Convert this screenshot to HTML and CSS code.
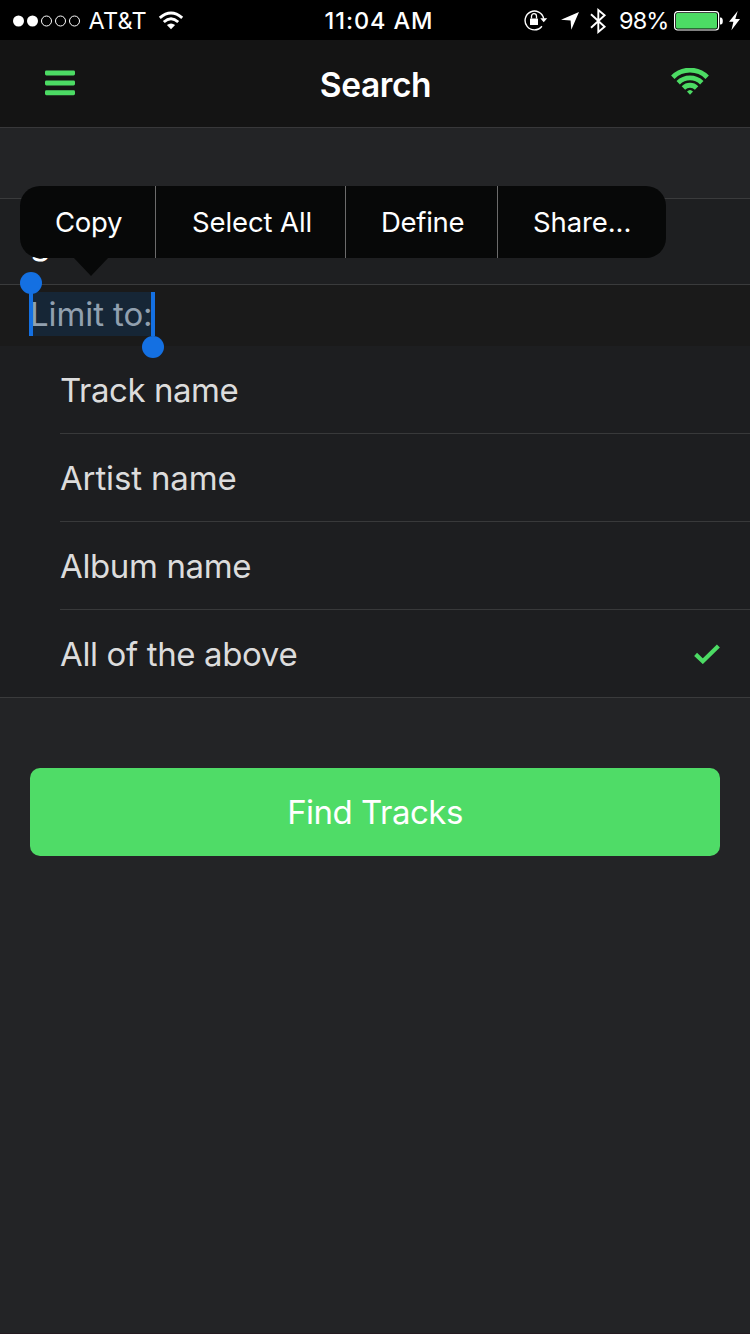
FILE: index.html
```html
<!DOCTYPE html>
<html lang="en">
<head>
<meta charset="utf-8">
<title>Search</title>
<link rel="stylesheet" href="styles.css">
</head>
<body>
<div class="app">
  <header class="status">
    <div class="status-left">
      <svg class="signal" width="68" height="12" viewBox="0 0 68 12">
        <g fill="#fff"><circle cx="5.5" cy="6" r="5.5"/><circle cx="19.5" cy="6" r="5.5"/></g>
        <g fill="none" stroke="#fff" stroke-width="1"><circle cx="33.5" cy="6" r="5"/><circle cx="47.5" cy="6" r="5"/><circle cx="61.5" cy="6" r="5"/></g>
      </svg>
      <span class="carrier">AT&amp;T</span>
      <svg class="wifi-small" width="26" height="19" viewBox="0 0 26 19">
        <path d="M13 18.2 8.9 14.1Q13 10.7 17.1 14.1Z" fill="#fff"/>
        <g fill="none" stroke="#fff" stroke-width="2.9"><path d="M5.8 11Q13 4.7 20.2 11"/><path d="M1.8 6.9Q13-2.9 24.2 6.9"/></g>
      </svg>
    </div>
    <span class="clock">11:04 AM</span>
    <div class="status-right">
      <svg class="lock" width="24" height="22" viewBox="0 0 24 22">
        <path d="M17.9 16.3A9.4 9.4 0 1 1 19.7 8.6" fill="none" stroke="#fff" stroke-width="1.4"/>
        <path d="M16.3 8.3H23.2L19.7 12.2Z" fill="#fff"/>
        <rect x="6" y="8.5" width="8" height="6.5" rx=".5" fill="#fff"/>
        <path d="M7.5 8.5V6.2a2.5 2.5 0 0 1 5 0V8.5" fill="none" stroke="#fff" stroke-width="1.3"/>
      </svg>
      <svg class="location" width="18" height="18" viewBox="0 0 18 18"><path d="M18 0 10.3 17.8 9.6 8.5 0 7.8Z" fill="#fff"/></svg>
      <svg class="bluetooth" width="17" height="26" viewBox="0 0 17 26"><path d="M1 6.3 14.6 18.8 8.3 24V2L14.6 7.2 1 19.7" fill="none" stroke="#fff" stroke-width="1.9"/></svg>
      <span class="percent">98%</span>
      <svg class="battery" width="49" height="20" viewBox="0 0 49 20">
        <rect x=".6" y=".6" width="44" height="18.4" rx="3" fill="none" stroke="#fff" stroke-width="1.2"/>
        <rect x="2" y="2" width="41" height="15.6" rx="1.5" fill="#4cdb64"/>
        <path d="M46 6.4h.6q2.2 0 2.2 3.5t-2.2 3.5H46Z" fill="#fff"/>
      </svg>
      <svg class="bolt" width="11" height="20" viewBox="0 0 11 20"><path d="M8.7 0 0 10.8H4.4L2.4 19.3 11 7.9H6.3Z" fill="#fff"/></svg>
    </div>
  </header>

  <nav class="navbar">
    <svg class="menu" width="30" height="26" viewBox="0 0 30 26" fill="#4cdb64"><rect y=".4" width="30" height="5" rx="1.4"/><rect y="10.4" width="30" height="5" rx="1.4"/><rect y="20.2" width="30" height="5" rx="1.4"/></svg>
    <h1 class="title">Search</h1>
    <svg class="wifi" width="38" height="28" viewBox="0 0 38 28">
      <path d="M19 26.8 16 23.6Q19 20.6 22 23.6Z" fill="#4cdb64"/>
      <g fill="none" stroke="#4cdb64" stroke-width="4.8"><path d="M1.8 9.2A24.4 24.4 0 0 1 36.2 9.2"/><path d="M7.2 14.7A16.8 16.8 0 0 1 30.8 14.7"/><path d="M12.4 20A9.3 9.3 0 0 1 25.6 20"/></g>
    </svg>
  </nav>

  <main class="content">
    <div class="field">g</div>
    <div class="limit">
      <span class="selection">Limit to:<i class="handle start"></i><i class="handle end"></i></span>
    </div>
    <ul class="options">
      <li class="option"><span class="track">Track name</span></li>
      <li class="option"><span class="artist">Artist name</span></li>
      <li class="option"><span class="album">Album name</span></li>
      <li class="option"><span class="all">All of the above</span>
        <svg class="check" width="26" height="20" viewBox="0 0 26 20"><path d="M1.6 10.4 8.8 17.2 24.4 1.9" fill="none" stroke="#4cdb64" stroke-width="4.2"/></svg></li>
    </ul>
    <button class="find">Find Tracks</button>
  </main>

  <div class="popover">
    <span class="action copy">Copy</span>
    <span class="action select">Select All</span>
    <span class="action define">Define</span>
    <span class="action share">Share...</span>
    <i class="arrow"></i>
  </div>
</div>
</body>
</html>
```

FILE: styles.css
```css
* { box-sizing: border-box; }
body { margin: 0; background: #232426; font-family: Inter, "Liberation Sans", sans-serif; }
svg { display: block; flex: none; }
.app { position: relative; width: 750px; height: 1334px; overflow: hidden; background: #232426; border-bottom: 1px solid #231a20; }

.status { height: 40px; background: #000; color: #fff; display: grid; grid-template-columns: 1fr auto 1fr; align-items: center; font-size: 23.5px; line-height: 40px; white-space: nowrap; }
.status span { padding-top: 1px; height: 41px; }
.status-left, .status-right { display: flex; align-items: center; height: 40px; }
.status-left { padding-left: 13px; }
.status-right { justify-content: flex-end; padding-right: 10px; }
.signal { margin-top: 1px; }
.carrier { margin-left: 7.5px; width: 59px; letter-spacing: 0.2px; }
.wifi-small { margin-left: 10px; }
.clock { font-weight: 550; padding-left: 8px; letter-spacing: .9px; }
.lock { margin-right: 2px; margin-top: 1px; }
.location { margin-left: 11px; margin-top: 1px; }
.bluetooth { margin-left: 11px; }
.percent { margin-left: 12px; width: 49px; letter-spacing: -0.9px; }
.battery { margin-left: 6px; margin-top: 1px; }
.bolt { margin-left: 6px; }

.navbar { height: 88px; padding: 0 41px 0 45px; background: #141414; border-bottom: 1px solid #38383a; display: grid; grid-template-columns: 38px 1fr 38px; align-items: center; }
.menu { margin-top: -1px; }
.title { margin: 2px 0 0; padding-right: 3px; text-align: center; color: #fff; font-size: 33.5px; font-weight: 600; line-height: 44px; letter-spacing: -0.4px; }
.wifi { margin-top: -4px; }

.content { padding-top: 70px; font-size: 33px; }
.field { height: 87px; padding: 0 30px; line-height: 86px; border: solid #3a3b3c; border-width: 1px 0; background: #1e1f21; color: #fff; font-size: 34px; }
.limit { height: 61px; padding: 7px 30px 0; background: #1a1a1a; }
.selection { position: relative; display: block; width: 124px; height: 44px; line-height: 44px; background: #162636; color: #91a0af; white-space: nowrap; letter-spacing: -0.1px; }
.handle { position: absolute; width: 4px; height: 44px; background: #1470e2; }
.handle::after { content: ""; position: absolute; left: -9px; width: 22px; height: 22px; border-radius: 50%; background: #1470e2; }
.start { left: -1px; top: 0; }
.start::after { top: -20px; }
.end { right: -1px; top: 0; }
.end::after { top: 44px; }

.options { margin: 0; padding: 0 0 0 60px; list-style: none; background: #1d1e20; border-bottom: 1px solid #3a3b3c; }
.option { height: 88px; padding-right: 30px; display: flex; align-items: center; justify-content: space-between; border-bottom: 1px solid #38393a; color: #dcdcdc; line-height: 44px; letter-spacing: -0.45px; }
.artist { letter-spacing: -0.15px; }
.album, .all { letter-spacing: -0.37px; }
.option:last-child { height: 87px; border: 0; }

.find { display: block; width: 690px; height: 88px; margin: 70px auto 0; padding: 0; border: 0; border-radius: 10px; background: #4fdc67; color: #fff; font: 400 33px/88px Inter, "Liberation Sans", sans-serif; letter-spacing: -0.5px; }

.popover { position: absolute; left: 20px; top: 186px; width: 646px; height: 72px; border-radius: 20px; background: #070808; display: grid; grid-template-columns: 136px 190px 152px 168px; color: #fff; font-size: 27.5px; line-height: 73px; white-space: nowrap; }
.action { height: 72px; padding-left: 36px; border-right: 1px solid #6b6b6b; letter-spacing: -0.1px; }
.copy { padding-left: 35px; letter-spacing: -0.3px; }
.define { padding-left: 35px; letter-spacing: -0.3px; }
.share { padding-left: 35px; border: 0; }
.arrow { position: absolute; left: 53px; top: 71px; border: solid transparent; border-width: 19px 18.5px 0; border-top-color: #070808; }
```
